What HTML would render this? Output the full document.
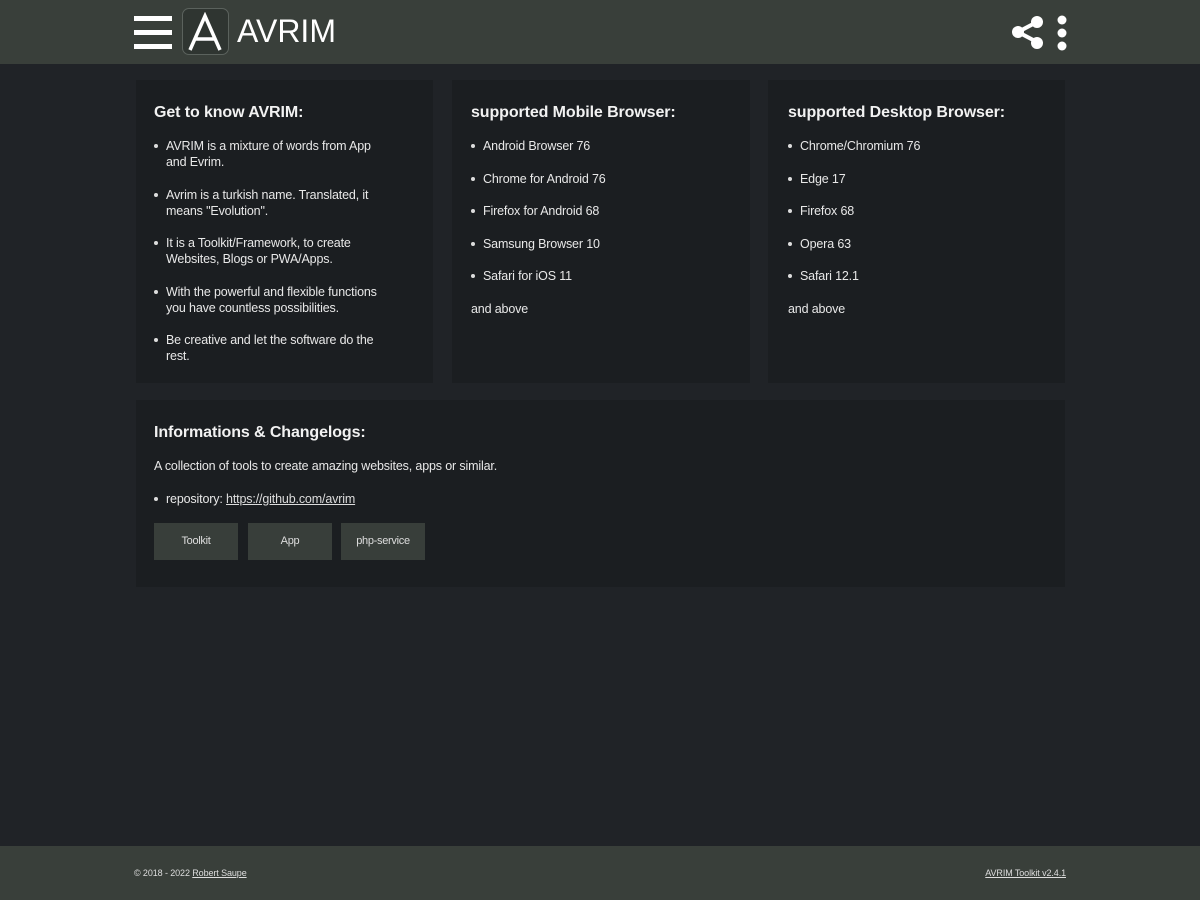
<!DOCTYPE html>
<html><head><meta charset="utf-8"><style>
*{box-sizing:border-box;margin:0;padding:0}
body{width:1200px;height:900px;background:#202327;font-family:"Liberation Sans",sans-serif;color:#e8e8e8;position:relative;overflow:hidden}
.hdr{position:absolute;left:0;top:0;width:1200px;height:64px;background:#393f3a}
.card{position:absolute;background:#1b1e21;padding:24px 36px 22px 18px}
h3{font-size:16px;font-weight:bold;color:#f2f2f2;margin:0 0 16px;letter-spacing:-0.1px}
ul{list-style:none}
li{font-size:12.5px;line-height:16px;padding-left:12px;position:relative;margin-bottom:16.5px;letter-spacing:-0.15px}
li:before{content:"";position:absolute;left:0;top:6px;width:4px;height:4px;border-radius:50%;background:#ddd}
p{font-size:12.5px;line-height:16px;letter-spacing:-0.15px}
.btn{position:absolute;top:123px;width:84px;height:37px;background:#383e3a;font-size:11px;color:#ddd;text-align:center;line-height:37px;letter-spacing:-0.3px}
.ftr{position:absolute;left:0;top:846px;width:1200px;height:54px;background:#393f3a;font-size:9px;color:#ddd;letter-spacing:-0.1px}
a{color:#ddd;text-decoration:underline}
</style></head><body>
<div class="hdr">
<svg style="position:absolute;left:134px;top:15px" width="38" height="36"><rect x="0" y="1" width="38" height="5" fill="#fff"/><rect x="0" y="15" width="38" height="5" fill="#fff"/><rect x="0" y="29" width="38" height="5" fill="#fff"/></svg>
<div style="position:absolute;left:182px;top:8px;width:47px;height:47px;border:1.5px solid #5b625d;border-radius:7px;background:#2f3531"></div>
<svg style="position:absolute;left:187px;top:12px" width="36" height="40"><path d="M3 38 L18 4 L33 38 M9 27 H27" stroke="#fff" stroke-width="3.5" fill="none"/></svg>
<div style="position:absolute;left:237px;top:13px;font-size:32px;color:#fff">AVRIM</div>
<svg style="position:absolute;left:1010px;top:14px" width="36" height="36"><path d="M27 8 L8 18 L27 28" stroke="#fff" stroke-width="4" fill="none"/><circle cx="27" cy="8" r="6" fill="#fff"/><circle cx="8" cy="18" r="6" fill="#fff"/><circle cx="27" cy="29" r="6" fill="#fff"/></svg>
<svg style="position:absolute;left:1055px;top:14px" width="14" height="38"><circle cx="7" cy="6" r="4.5" fill="#fff"/><circle cx="7" cy="19" r="4.5" fill="#fff"/><circle cx="7" cy="32" r="4.5" fill="#fff"/></svg>
</div>
<div class="card" style="left:136px;top:80px;width:297px;height:303px">
<h3>Get to know AVRIM:</h3>
<ul><li>AVRIM is a mixture of words from App<br>and Evrim.</li><li>Avrim is a turkish name. Translated, it means "Evolution".</li><li>It is a Toolkit/Framework, to create Websites, Blogs or PWA/Apps.</li><li>With the powerful and flexible functions you have countless possibilities.</li><li>Be creative and let the software do the rest.</li></ul>
</div>
<div class="card" style="left:452px;top:80px;width:298px;height:303px;padding-left:19px">
<h3>supported Mobile Browser:</h3>
<ul><li>Android Browser 76</li><li>Chrome for Android 76</li><li>Firefox for Android 68</li><li>Samsung Browser 10</li><li>Safari for iOS 11</li></ul><p>and above</p>
</div>
<div class="card" style="left:768px;top:80px;width:297px;height:303px;padding-left:20px">
<h3>supported Desktop Browser:</h3>
<ul><li>Chrome/Chromium 76</li><li>Edge 17</li><li>Firefox 68</li><li>Opera 63</li><li>Safari 12.1</li></ul><p>and above</p>
</div>
<div class="card" style="left:136px;top:400px;width:929px;height:187px">
<h3>Informations &amp; Changelogs:</h3>
<p style="margin-bottom:17px">A collection of tools to create amazing websites, apps or similar.</p>
<ul><li>repository: <a>https://github.com/avrim</a></li></ul>
<div class="btn" style="left:18px">Toolkit</div><div class="btn" style="left:112px">App</div><div class="btn" style="left:205px">php-service</div>
</div>
<div class="ftr"><span style="position:absolute;left:134px;top:22px">© 2018 - 2022 <a>Robert Saupe</a></span><span style="position:absolute;right:134px;top:22px"><a>AVRIM Toolkit v2.4.1</a></span></div>
</body></html>
